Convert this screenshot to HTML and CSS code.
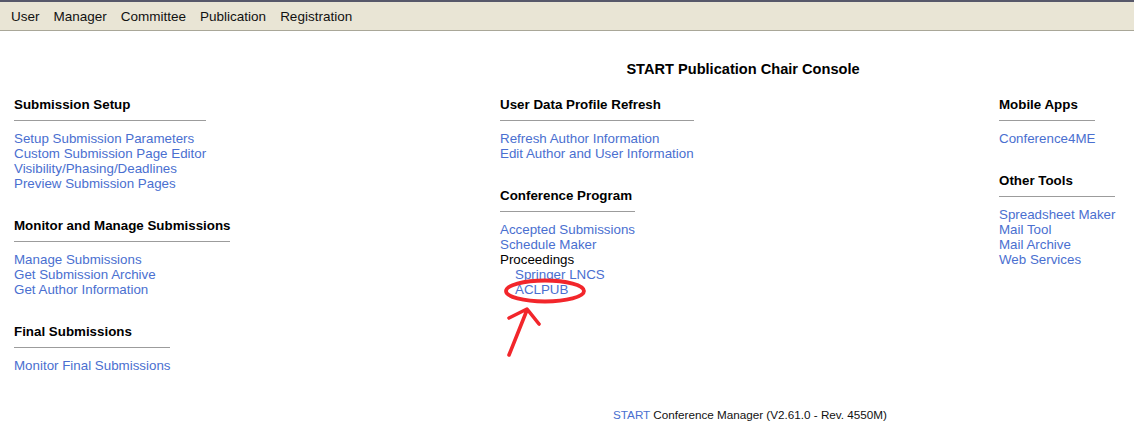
FILE: index.html
```html
<!DOCTYPE html>
<html>
<head>
<meta charset="utf-8">
<title>START Publication Chair Console</title>
<link rel="stylesheet" href="styles.css">
</head>
<body>
<nav class="menubar">
  <a class="menu-item" href="#">User</a>
  <a class="menu-item" href="#">Manager</a>
  <a class="menu-item" href="#">Committee</a>
  <a class="menu-item" href="#">Publication</a>
  <a class="menu-item" href="#">Registration</a>
</nav>

<h1 class="title">START Publication Chair Console</h1>

<main class="console">
  <div class="column">
    <section class="section">
      <h2 class="section-head">Submission Setup</h2>
      <ul class="links">
        <li><a href="#">Setup Submission Parameters</a></li>
        <li><a href="#">Custom Submission Page Editor</a></li>
        <li><a href="#">Visibility/Phasing/Deadlines</a></li>
        <li><a href="#">Preview Submission Pages</a></li>
      </ul>
    </section>
    <section class="section">
      <h2 class="section-head">Monitor and Manage Submissions</h2>
      <ul class="links">
        <li><a href="#">Manage Submissions</a></li>
        <li><a href="#">Get Submission Archive</a></li>
        <li><a href="#">Get Author Information</a></li>
      </ul>
    </section>
    <section class="section">
      <h2 class="section-head">Final Submissions</h2>
      <ul class="links">
        <li><a href="#">Monitor Final Submissions</a></li>
      </ul>
    </section>
  </div>

  <div class="column">
    <section class="section">
      <h2 class="section-head">User Data Profile Refresh</h2>
      <ul class="links">
        <li><a href="#">Refresh Author Information</a></li>
        <li><a href="#">Edit Author and User Information</a></li>
      </ul>
    </section>
    <section class="section">
      <h2 class="section-head">Conference Program</h2>
      <ul class="links">
        <li><a href="#">Accepted Submissions</a></li>
        <li><a href="#">Schedule Maker</a></li>
        <li class="plain">Proceedings</li>
        <li class="sub"><a href="#">Springer LNCS</a></li>
        <li class="sub"><a href="#">ACLPUB</a></li>
      </ul>
    </section>
  </div>

  <div class="column">
    <section class="section">
      <h2 class="section-head">Mobile Apps</h2>
      <ul class="links">
        <li><a href="#">Conference4ME</a></li>
      </ul>
    </section>
    <section class="section">
      <h2 class="section-head">Other Tools</h2>
      <ul class="links">
        <li><a href="#">Spreadsheet Maker</a></li>
        <li><a href="#">Mail Tool</a></li>
        <li><a href="#">Mail Archive</a></li>
        <li><a href="#">Web Services</a></li>
      </ul>
    </section>
  </div>
</main>

<footer class="footer"><a href="#">START</a> Conference Manager (V2.61.0 - Rev. 4550M)</footer>

<svg class="annotation" width="1134" height="430" viewBox="0 0 1134 430">
  <ellipse cx="545" cy="291" rx="39" ry="10.5" fill="none" stroke="#f2262b" stroke-width="3.8"/>
  <path d="M509 355 L527 310 M509 318 L527 309 L539 324" fill="none" stroke="#f2262b" stroke-width="3.6" stroke-linecap="round" stroke-linejoin="round"/>
</svg>
</body>
</html>
```

FILE: styles.css
```css
html, body {
  margin: 0;
  padding: 0;
  background: #ffffff;
}

body {
  font-family: "Liberation Sans", Arial, Helvetica, sans-serif;
  font-size: 13.35px;
  color: #000;
  position: relative;
  width: 1134px;
  height: 430px;
  overflow: hidden;
}

a {
  color: #4a6fd0;
  text-decoration: none;
}

.menubar {
  display: flex;
  gap: 14px;
  align-items: center;
  height: 28px;
  padding: 0 0 0 11px;
  background: #e9e5d5;
  border-top: 2px solid #57586a;
  border-bottom: 1px solid #a9a798;
}

.menu-item {
  color: #111;
  font-size: 13.5px;
  line-height: 15px;
}

.title {
  margin: 30px 0 0 0;
  padding-left: 352px;
  text-align: center;
  font-size: 14.6px;
  line-height: 16px;
  font-weight: bold;
}

.console {
  display: grid;
  grid-template-columns: 486px 499px 1fr;
  padding-left: 14px;
  margin-top: 20px;
}

.column {
  display: flex;
  flex-direction: column;
  align-items: flex-start;
  gap: 27px;
}

.section {
  display: flex;
  flex-direction: column;
}

.section-head {
  margin: 0;
  font-size: 13.35px;
  line-height: 15px;
  font-weight: bold;
  padding-bottom: 8px;
  border-bottom: 1px solid #9c9c9c;
}

.links {
  list-style: none;
  margin: 10px 0 0 0;
  padding: 0;
  line-height: 15px;
}

.links .plain {
  color: #000;
}

.links .sub {
  padding-left: 15px;
}

.footer {
  margin-top: 35px;
  padding-left: 366px;
  text-align: center;
  font-size: 11.7px;
  line-height: 13px;
  color: #111;
}

.annotation {
  position: absolute;
  left: 0;
  top: 0;
  pointer-events: none;
}
```
